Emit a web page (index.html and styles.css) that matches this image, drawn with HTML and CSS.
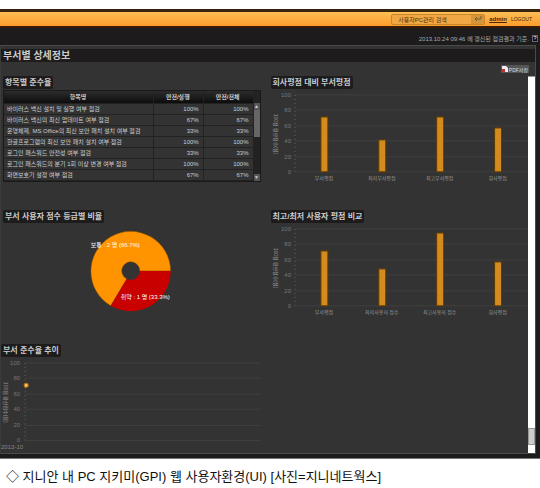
FILE: index.html
```html
<!DOCTYPE html>
<html lang="ko">
<head>
  <meta charset="UTF-8">
  <meta name="viewport" content="width=device-width, initial-scale=1.0">
  <title>부서별 상세정보</title>
  <link rel="stylesheet" href="styles.css">
</head>
<body>

  <div class="window">
    <header class="topbar">
      <form class="search">
        <input type="text" aria-label="사용자PC관리 검색" value="사용자PC관리 검색">
        <button type="button" aria-label="검색">
          <svg width="9" height="6" viewBox="0 0 9 6"><path d="M8 0v3H2M4 1L2 3l2 2" fill="none" stroke="#7a5a26"/></svg>
        </button>
      </form>
      <a class="user" href="#">admin</a>
      <a class="logout" href="#">LOGOUT</a>
    </header>

    <div class="status">
      <span>2013.10.24 09:46 에 갱신된 점검결과 기준.</span>
      <button type="button" class="help">?</button>
    </div>

    <main class="panel">
      <h1>부서별 상세정보</h1>
      <div class="toolbar">
        <button type="button" class="pdf">
          <svg width="6" height="6" viewBox="0 0 6 6"><path d="M0 0h4l2 2v4H0z" fill="#eee"/><path d="M0 3h3v3H0z" fill="#b33"/></svg>PDF저장
        </button>
      </div>

      <div class="scroll-area">
        <div class="grid">
          <section class="card">
            <h2>항목별 준수율</h2>
            <div class="table-box">
              <table>
                <thead>
                  <tr><th class="name">항목명</th><th class="run">안전/실행</th><th>안전/전체</th></tr>
                </thead>
                <tbody>
                  <tr><td>바이러스 백신 설치 및 실행 여부 점검</td><td>100%</td><td>100%</td></tr>
                  <tr><td>바이러스 백신의 최신 업데이트 여부 점검</td><td>67%</td><td>67%</td></tr>
                  <tr><td>운영체제, MS Office의 최신 보안 패치 설치 여부 점검</td><td>33%</td><td>33%</td></tr>
                  <tr><td>한글프로그램의 최신 보안 패치 설치 여부 점검</td><td>100%</td><td>100%</td></tr>
                  <tr><td>로그인 패스워드 안전성 여부 점검</td><td>33%</td><td>33%</td></tr>
                  <tr><td>로그인 패스워드의 분기 1회 이상 변경 여부 점검</td><td>100%</td><td>100%</td></tr>
                  <tr><td>화면보호기 설정 여부 점검</td><td>67%</td><td>67%</td></tr>
                </tbody>
              </table>
              <div class="table-scroll">
                <span class="arrow">▲</span>
                <span class="thumb"></span>
                <span class="arrow down">▼</span>
              </div>
            </div>
          </section>

          <section class="card">
            <h2>회사평점 대비 부서평점</h2>
            <svg class="chart" viewBox="0 0 258 96">
              <path class="gridline" d="M24 6H258M24 21H258M24 37H258M24 52H258M24 68H258M24 83H258"/>
              <path class="axis" d="M24 6V83"/>
              <g class="scale">
                <text x="20" y="8">100</text><text x="20" y="23">80</text><text x="20" y="39">60</text>
                <text x="20" y="54">40</text><text x="20" y="70">20</text><text x="20" y="85">0</text>
              </g>
              <text class="unit" transform="translate(3 45) rotate(90)">100점 환산점수(점)</text>
              <g class="bars">
                <rect x="50" y="28" width="7" height="55"/>
                <rect x="108" y="51" width="7" height="32"/>
                <rect x="166" y="28" width="7" height="55"/>
                <rect x="224" y="39" width="7" height="44"/>
              </g>
              <g class="labels">
                <text x="53" y="91">부서평점</text><text x="111" y="91">최저부서평점</text>
                <text x="169" y="91">최고부서평점</text><text x="227" y="91">회사평점</text>
              </g>
            </svg>
          </section>

          <section class="card">
            <h2>부서 사용자 점수 등급별 비율</h2>
            <svg class="chart" viewBox="0 0 258 96">
              <path d="M168 48A40 40 0 1 0 108 83L124 56A9 9 0 1 1 137 48Z" fill="#ff9400" stroke="#7a4600" stroke-opacity=".5"/>
              <path d="M168 48A40 40 0 0 1 108 83L124 56A9 9 0 0 0 137 48Z" fill="#c80000"/>
              <g class="slice">
                <text x="88" y="24">보통 : 2 명 (66.7%)</text>
                <text x="118" y="76">취약 : 1 명 (33.3%)</text>
              </g>
            </svg>
          </section>

          <section class="card">
            <h2>최고/최저 사용자 평점 비교</h2>
            <svg class="chart" viewBox="0 0 258 96">
              <path class="gridline" d="M24 6H258M24 21H258M24 37H258M24 52H258M24 68H258M24 83H258"/>
              <path class="axis" d="M24 6V83"/>
              <g class="scale">
                <text x="20" y="8">100</text><text x="20" y="23">80</text><text x="20" y="39">60</text>
                <text x="20" y="54">40</text><text x="20" y="70">20</text><text x="20" y="85">0</text>
              </g>
              <text class="unit" transform="translate(3 45) rotate(90)">100점 환산점수(점)</text>
              <g class="bars">
                <rect x="50" y="28" width="7" height="55"/>
                <rect x="108" y="46" width="7" height="37"/>
                <rect x="166" y="10" width="7" height="73"/>
                <rect x="224" y="39" width="7" height="44"/>
              </g>
              <g class="labels">
                <text x="53" y="91">부서평점</text><text x="111" y="91">최저사용자 점수</text>
                <text x="169" y="91">최고사용자 점수</text><text x="227" y="91">회사평점</text>
              </g>
            </svg>
          </section>

          <section class="card trend">
            <h2>부서 준수율 추이</h2>
            <svg class="chart" viewBox="0 0 258 96">
              <path class="gridline" d="M24 6H258M24 21H258M24 37H258M24 52H258M24 68H258M24 83H258"/>
              <path class="axis" d="M24 6V83"/>
              <g class="scale">
                <text x="19" y="8">100</text><text x="19" y="23">80</text><text x="19" y="39">60</text>
                <text x="19" y="54">40</text><text x="19" y="70">20</text><text x="19" y="85">0</text>
              </g>
              <text class="unit" transform="translate(3 45) rotate(90)">100점 환산점수(점)</text>
              <circle cx="25" cy="28" r="2" fill="#ffc266" stroke="#b87410"/>
              <text class="date" x="0" y="91">2013-10</text>
            </svg>
          </section>
        </div>

        <div class="scrollbar"><span></span></div>
      </div>
    </main>
  </div>

  <p class="caption">◇ 지니안 내 PC 지키미(GPI) 웹 사용자환경(UI) [사진=지니네트웍스]</p>

</body>
</html>
```
FILE: styles.css
```css
* {
  box-sizing: border-box;
}
body {
  margin: 0;
  padding-top: 9px;
  background: #fff;
  font-family: "Liberation Sans", "Noto Sans CJK KR", sans-serif;
  font-size: 6px;
  color: #ccc;
}
button, input {
  font: inherit;
  padding: 0;
  margin: 0;
}
h1, h2, p {
  margin: 0;
}
.window {
  background: #1d1b1c;
  padding-bottom: 4px;
  border-bottom: 1px solid #777;
}

/* Orange bar */
.topbar {
  display: flex;
  justify-content: flex-end;
  align-items: center;
  gap: 4px;
  height: 19px;
  padding-right: 8px;
  border-top: 3px solid #35250f;
  border-bottom: 2px solid #3a1a05;
  background: linear-gradient(#ffbd55, #fb9d2c);
}
.search {
  display: flex;
  width: 94px;
  height: 11px;
  border: 1px solid #c9872c;
  border-radius: 2px;
  background: #f0a744;
}
.search input {
  flex: 1;
  min-width: 0;
  padding-left: 6px;
  border: 0;
  background: none;
  color: #4a2f0c;
  font-size: 6px;
}
.search button {
  display: flex;
  align-items: center;
  justify-content: center;
  width: 13px;
  border: 0;
  background: #d5953b;
}
.topbar a {
  color: #4a2300;
}
.topbar .user {
  font-weight: bold;
}
.topbar .logout {
  font-size: 5px;
  text-decoration: none;
}

.status {
  display: flex;
  justify-content: flex-end;
  align-items: center;
  gap: 3px;
  height: 17px;
  padding: 4px 2px 0 0;
  color: #aaa;
}
.help {
  width: 6px;
  height: 7px;
  border: 1px solid #667;
  background: #0c0c18;
  color: #fff;
  line-height: 5px;
}

.panel {
  margin-right: 4px;
  padding-top: 3px;
  border: 1px solid #4a4a4a;
  border-left-color: #3c3c3c;
  background: #333;
}
h1 {
  height: 13px;
  padding-left: 2px;
  background: #1d1b1c;
  font-size: 10px;
  line-height: 13px;
}
.toolbar {
  display: flex;
  justify-content: flex-end;
  height: 14px;
  padding: 3px 6px 0 0;
}
.pdf {
  display: flex;
  align-items: center;
  gap: 1px;
  height: 8px;
  padding: 0 1px;
  border: 0;
  background: #555;
  color: #ddd;
  font-size: 5px;
}

.scroll-area {
  display: flex;
}
.grid {
  flex: 1;
  display: grid;
  grid-template-columns: 1fr 1fr;
  grid-auto-rows: minmax(107px, auto);
  column-gap: 10px;
  row-gap: 25px;
  padding-left: 2px;
}
.card h2 {
  width: fit-content;
  height: 13px;
  padding: 0 2px;
  border-radius: 2px;
  background: #1d1b1c;
  font-size: 8px;
  line-height: 13px;
  white-space: nowrap;
}
.trend {
  margin-left: -2px;
}
.scrollbar {
  display: flex;
  align-items: flex-end;
  width: 7px;
  padding-bottom: 8px;
  border-top: 1px solid #999;
  background: #fff;
}
.scrollbar span {
  width: 100%;
  height: 17px;
  border: 1px solid #999;
  background: #ccc;
}

/* Compliance table */
.table-box {
  display: flex;
  width: 100%;
  margin-top: 1px;
  border: 1px solid #1a1a1a;
}
table {
  flex: 1;
  border-collapse: collapse;
  table-layout: fixed;
}
th, td {
  height: 11px;
  padding: 0 4px 0 3px;
  border-right: 1px solid #222;
  border-bottom: 1px solid #222;
  line-height: 10px;
  text-align: right;
  white-space: nowrap;
}
th {
  height: 12px;
  background: linear-gradient(#2c2c2c, #0d0d0d);
  text-align: center;
}
.name {
  width: 60%;
}
.run {
  width: 20%;
}
td:first-child {
  text-align: left;
}
.table-scroll {
  display: flex;
  flex-direction: column;
  width: 6px;
  padding-top: 12px;
  background: #222;
}
.table-scroll .thumb {
  height: 27px;
  background: #666;
}
.arrow {
  height: 7px;
  background: #555;
  font-size: 5px;
  line-height: 7px;
  text-align: center;
}
.arrow.down {
  margin-top: auto;
}

/* Charts */
.chart {
  display: block;
  width: 100%;
  overflow: visible;
}
.gridline {
  fill: none;
  stroke: #3f3f3f;
}
.axis {
  stroke: #666;
  stroke-dasharray: 1 3;
}
.scale {
  fill: #777;
  text-anchor: end;
}
.unit, .labels {
  fill: #999;
  font-size: 5px;
  text-anchor: middle;
}
.date {
  fill: #888;
}
.bars {
  fill: #d48b1e;
  stroke: #5c3a08;
  stroke-width: 1px;
}
.slice {
  fill: #fff;
}

.caption {
  padding: 8px 6px;
  color: #111;
  font-size: 13px;
  line-height: 20px;
}
```
